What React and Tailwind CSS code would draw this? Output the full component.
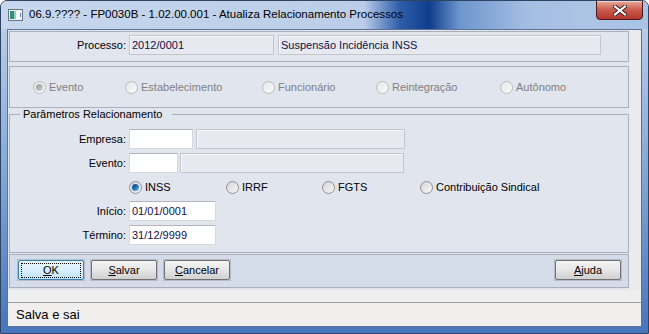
import React from 'react';

const font = { fontFamily: '"Liberation Sans", Arial, sans-serif' };

function Radio({ checked, disabled, label, className }) {
  return (
    <div className={'flex items-center ' + (className || '')}>
      <span
        className={
          'w-[13px] h-[13px] rounded-full border flex items-center justify-center ' +
          (disabled
            ? 'border-[#b8bbbf] bg-gradient-to-br from-[#e6e6e6] to-[#fbfbfb]'
            : 'border-[#8e8f8f] bg-gradient-to-br from-[#d4d4d4] to-[#fafafa]')
        }
      >
        {checked && (
          <span
            className={
              'w-[7px] h-[7px] rounded-full ' +
              (disabled
                ? 'bg-gradient-to-br from-[#9a9a9a] to-[#cfcfcf]'
                : 'bg-gradient-to-br from-[#0b3a75] via-[#1f6fb8] to-[#7cc3f2]')
            }
          />
        )}
      </span>
      <span className={'ml-[3px] ' + (disabled ? 'text-[#7f7f7f]' : 'text-black')}>{label}</span>
    </div>
  );
}

function Field({ value, width, disabled }) {
  return (
    <div
      className={
        'h-[20px] border flex items-center pl-[2px] text-[#10104a] ' +
        (disabled
          ? 'border-[#c3c7cd] bg-[#e6e9ef] shadow-[inset_1px_1px_0_#f7f8fa]'
          : 'border-[#d5d9df] border-t-[#b3b7bd] bg-white')
      }
      style={{ width }}
    >
      {value}
    </div>
  );
}

function Button({ children, focused }) {
  return (
    <div className="border border-[#b7bcc4] p-0">
      <div
        className={
          'w-[66px] h-[20px] rounded-[2px] border flex items-center justify-center ' +
          (focused
            ? 'border-[#3c7fb1] bg-gradient-to-b from-[#eaf6fd] via-[#d9f0fc] to-[#bde5fb]'
            : 'border-[#707070] bg-gradient-to-b from-[#f3f3f3] via-[#e6e6e6] to-[#d0d0d0]')
        }
      >
        <div
          className={
            'flex items-center justify-center ' +
            (focused ? 'w-[60px] h-[15px] border border-dotted border-black' : '')
          }
        >
          {children}
        </div>
      </div>
    </div>
  );
}

export default function App() {
  return (
    <div
      className="w-[649px] h-[334px] flex flex-col rounded-t-[7px] border border-[#2f4463] bg-gradient-to-b from-[#c2d4eb] via-[#86a8d6] to-[#4576bb] overflow-hidden text-[11px] text-black"
      style={font}
    >
      {/* barra de título */}
      <div className="h-[28px] flex items-start shrink-0 bg-gradient-to-r from-[#c6d7ed] via-[#bccfe9] to-[#a9c3e4]">
        <div className="flex-1 h-full flex items-center pl-[7px] bg-[linear-gradient(90deg,transparent_0%,transparent_61%,#2f5ea9_67%,#0f3d8c_72%,#6c95cd_77%,#a3bde2_88%,transparent_100%)]">
          <svg width="15" height="12" viewBox="0 0 15 12" className="mt-[-1px]">
            <rect x="0.5" y="0.5" width="14" height="11" fill="#eef2f6" stroke="#6a7480" />
            <rect x="2" y="2" width="4" height="8" fill="#2e8f7a" />
            <rect x="6" y="2" width="2" height="8" fill="#9fc9bd" />
            <rect x="9" y="2" width="4" height="8" fill="#ffffff" />
            <rect x="12" y="4" width="1" height="4" fill="#4c86c9" />
          </svg>
          <span className="ml-[6px] text-[11.5px] text-black whitespace-nowrap">
            06.9.???? - FP0030B - 1.02.00.001 - Atualiza Relacionamento Processos
          </span>
        </div>
        <div className="w-[47px] h-[20px] mr-[5px] mt-[-1px] rounded-b-[4px] border border-[#4a1a1a] bg-gradient-to-b from-[#e9a99b] via-[#c85a4c] to-[#b6372b] flex items-center justify-center shadow-[inset_0_1px_0_#f4cfc6]">
          <svg width="14" height="11" viewBox="0 0 14 11">
            <path d="M2 1.5 L12 9.5 M12 1.5 L2 9.5" stroke="#3a1a1a" strokeWidth="4" strokeLinecap="square" />
            <path d="M2 1.5 L12 9.5 M12 1.5 L2 9.5" stroke="#ffffff" strokeWidth="2.2" strokeLinecap="square" />
          </svg>
        </div>
      </div>

      {/* área cliente */}
      <div className="flex-1 mx-[6px] mb-[6px] border border-[#5b7196] bg-[#efefef] flex flex-col">
        <div className="flex h-[260px]">
          <div className="w-[621px] bg-[#e1e5ee] pl-[1px] pt-[1px] flex flex-col">
            {/* processo */}
            <div className="w-[620px] h-[31px] border border-[#a8b0bc] flex items-start pt-[3px]">
              <div className="w-[116px] text-right h-[20px] leading-[20px]">Processo:</div>
              <div className="ml-[3px] flex gap-[4px]">
                <Field value="2012/0001" width="145px" disabled />
                <Field value="Suspensão Incidência INSS" width="323px" disabled />
              </div>
            </div>

            {/* tipo */}
            <div className="w-[620px] h-[42px] mt-[4px] border border-[#a8b0bc] flex items-center pl-[23px]">
              <Radio checked disabled label="Evento" className="w-[92px]" />
              <Radio disabled label="Estabelecimento" className="w-[137px]" />
              <Radio disabled label="Funcionário" className="w-[114px]" />
              <Radio disabled label="Reintegração" className="w-[124px]" />
              <Radio disabled label="Autônomo" />
            </div>

            {/* parâmetros */}
            <fieldset className="w-[620px] h-[145px] border border-[#a8b0bc] pb-[5px] flex flex-col">
              <legend className="ml-[10px] w-[152px] px-[3px] leading-[13px] text-[11px]">
                Parâmetros Relacionamento
              </legend>
              <div className="flex flex-col gap-[4px] pt-[8px]">
                <div className="flex items-center">
                  <div className="w-[116px] text-right">Empresa:</div>
                  <div className="ml-[3px] flex gap-[3px]">
                    <Field value="" width="64px" />
                    <Field value="" width="209px" disabled />
                  </div>
                </div>
                <div className="flex items-center">
                  <div className="w-[116px] text-right">Evento:</div>
                  <div className="ml-[3px] flex gap-[2px]">
                    <Field value="" width="49px" />
                    <Field value="" width="224px" disabled />
                  </div>
                </div>
                <div className="flex items-center h-[20px] pl-[119px]">
                  <Radio checked label="INSS" className="w-[97px]" />
                  <Radio label="IRRF" className="w-[96px]" />
                  <Radio label="FGTS" className="w-[98px]" />
                  <Radio label="Contribuição Sindical" />
                </div>
                <div className="flex items-center">
                  <div className="w-[116px] text-right">Início:</div>
                  <div className="ml-[3px]">
                    <Field value="01/01/0001" width="87px" />
                  </div>
                </div>
                <div className="flex items-center">
                  <div className="w-[116px] text-right">Término:</div>
                  <div className="ml-[3px]">
                    <Field value="31/12/9999" width="87px" />
                  </div>
                </div>
              </div>
            </fieldset>

            {/* botões */}
            <div className="w-[620px] h-[34px] mt-[1px] border border-[#a8b0bc] bg-[#d4dcea] flex items-start pt-[4px] pl-[7px] pr-[6px]">
              <div className="flex gap-[5px]">
                <Button focused>
                  <span><u>O</u>K</span>
                </Button>
                <Button>
                  <span><u>S</u>alvar</span>
                </Button>
                <Button>
                  <span><u>C</u>ancelar</span>
                </Button>
              </div>
              <div className="ml-auto">
                <Button>
                  <span><u>A</u>juda</span>
                </Button>
              </div>
            </div>
          </div>
          <div className="flex-1 bg-[#ebebeb]" />
        </div>
        <div className="flex-1" />
        <div className="h-[24px] border-t border-[#a0a0a0] bg-[#f0efed] flex items-center pl-[8px] text-[13px]">
          Salva e sai
        </div>
      </div>
    </div>
  );
}
